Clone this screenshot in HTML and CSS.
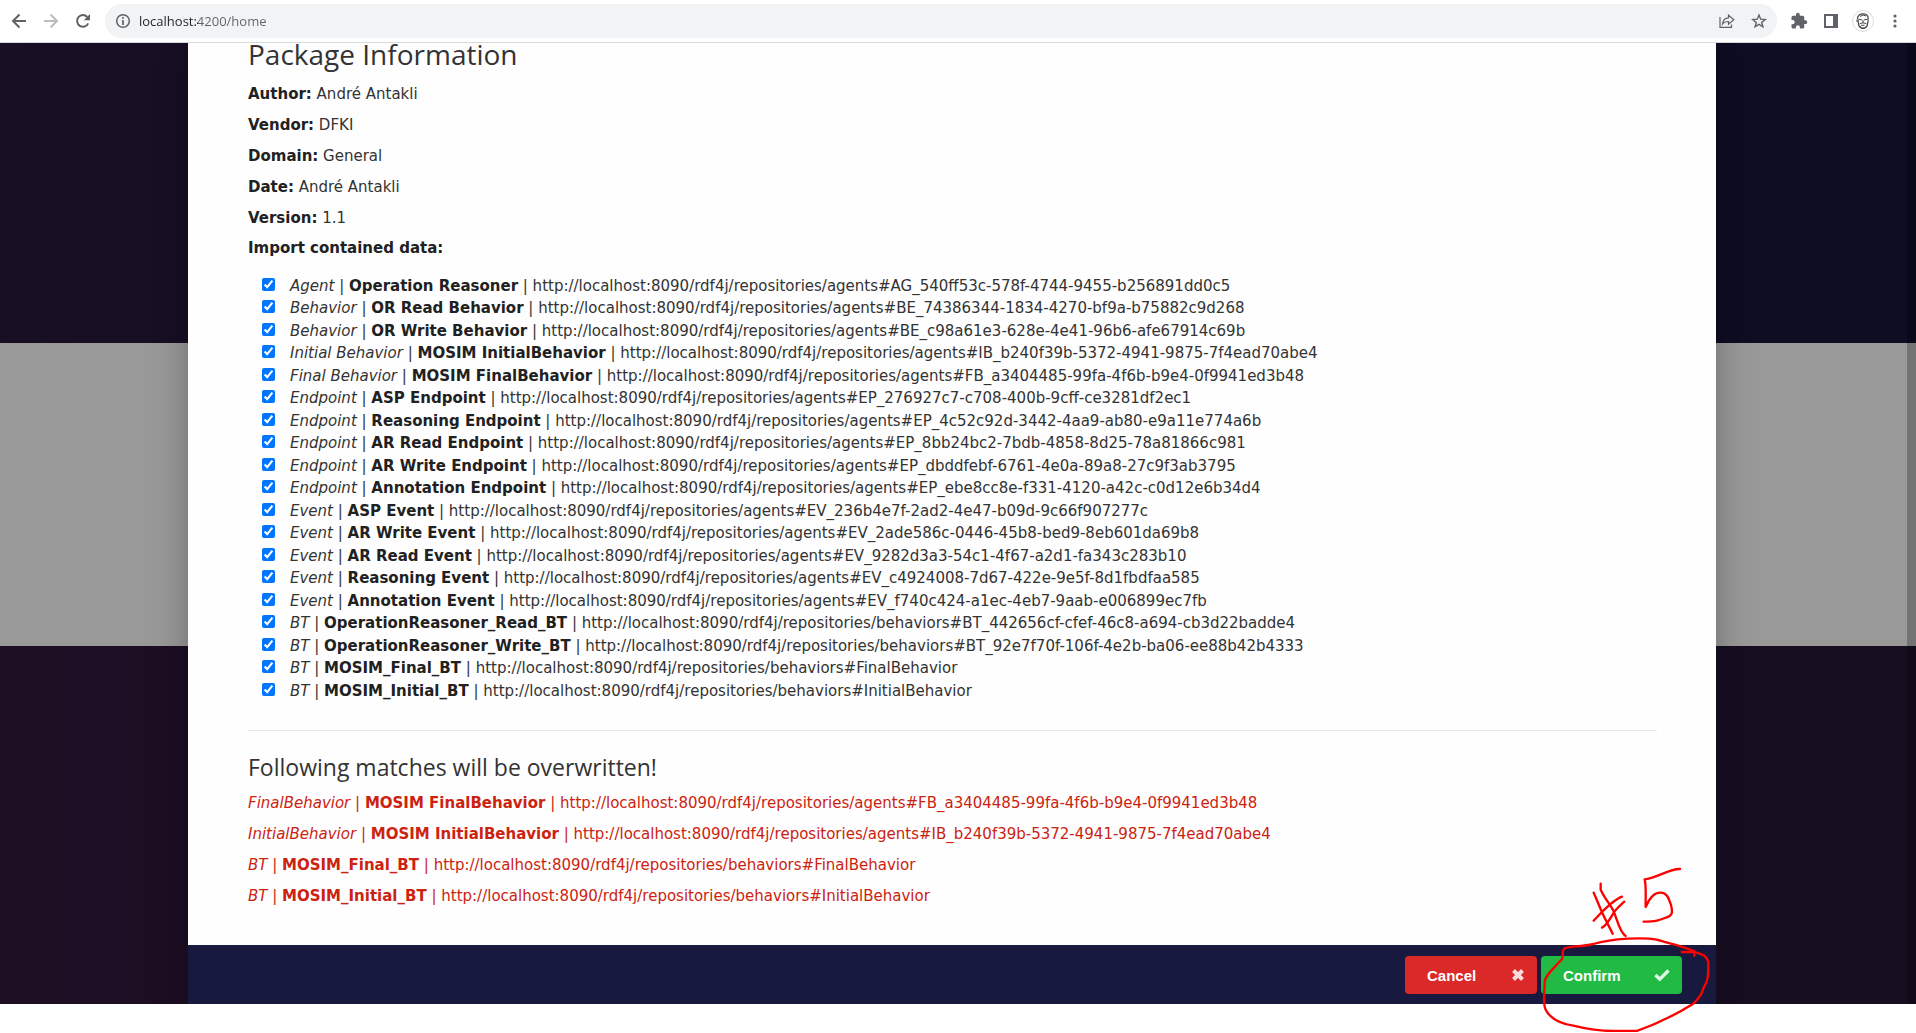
FILE: index.html
```html
<!DOCTYPE html>
<html lang="en">
<head>
<meta charset="utf-8">
<title>Package import</title>
<link rel="stylesheet" href="styles.css">
</head>
<body>
<header class="toolbar">
  <button class="tool" type="button" aria-label="Back"><svg width="16" height="16" viewBox="0 0 16 16" fill="none" stroke="#5f6368" stroke-width="2"><path d="M15 8H2.500M8.500 1.500L2 8l6.500 6.500"/></svg></button>
  <button class="tool" type="button" aria-label="Forward"><svg width="16" height="16" viewBox="0 0 16 16" fill="none" stroke="#babcbe" stroke-width="2"><path d="M1 8h12.500M7.500 1.500L14 8l-6.500 6.500"/></svg></button>
  <button class="tool" type="button" aria-label="Reload"><svg width="16" height="16" viewBox="0 0 16 16"><path d="M13.200 10.300A5.800 5.800 0 1 1 12.200 4" fill="none" stroke="#5f6368" stroke-width="2"/><path d="M15 1v6.200H8.800z" fill="#5f6368"/></svg></button>
  <div class="omnibox">
    <button class="site-info" type="button" aria-label="Site information"><svg width="16" height="16" viewBox="0 0 16 16" fill="none" stroke="#5f6368"><circle cx="8" cy="8" r="6.300" stroke-width="1.500"/><path d="M8 7v5M8 4v1.800" stroke-width="1.700"/></svg></button>
    <input class="address" type="text" value="localhost:4200/home" aria-label="Address">
    <button class="tool" type="button" aria-label="Share"><svg width="16" height="16" viewBox="0 0 16 16" fill="none" stroke="#5f6368" stroke-width="1.200"><path d="M1 4v10.400h11.500V11.500"/><path d="M3.500 11c.5-4 2.500-6 6-6.200V2l5.300 4.700-5.300 4.500V8.500C7 8.500 5 9 3.500 11z"/></svg></button>
    <button class="tool" type="button" aria-label="Bookmark"><svg width="16" height="16" viewBox="0 0 16 16" fill="none" stroke="#5f6368" stroke-width="1.400"><path d="M8 2l1.700 4.200 4.500.3-3.500 2.900 1.200 4.400L8 11.300l-3.900 2.500 1.200-4.400-3.500-2.900 4.500-.3z"/></svg></button>
  </div>
  <button class="tool" type="button" aria-label="Extensions"><svg width="18" height="18" viewBox="0 0 24 24" fill="#5f6368"><path d="M20.500 11H19V7a2 2 0 0 0-2-2h-4V3.500a2.500 2.500 0 0 0-5 0V5H4a2 2 0 0 0-2 2v3.800h1.500a2.700 2.700 0 0 1 0 5.400H2V20c0 1.100.9 2 2 2h3.800v-1.500a2.700 2.700 0 0 1 5.400 0V22H17a2 2 0 0 0 2-2v-4h1.500a2.500 2.500 0 0 0 0-5z"/></svg></button>
  <button class="tool" type="button" aria-label="Side panel"><svg width="14" height="14" viewBox="0 0 14 14"><path d="M0 0h14v14H0zM2 2v10h7V2z" fill="#5f6368" fill-rule="evenodd"/></svg></button>
  <button class="tool" type="button" aria-label="Profile"><svg width="22" height="22" viewBox="0 0 22 22" fill="none" stroke="#444"><circle cx="11" cy="11" r="10.500" fill="#fff" stroke="#dadce0"/><path d="M5.500 9c0-3.500 2.500-5.300 6-5.200 3.300.1 5 2.200 4.600 5.600" stroke-width="1.300"/><path d="M6 9.500l.5 5c1 2.800 2.500 4 4.500 4s4-1.500 4.500-4l.7-5" stroke-width="1.200"/><path d="M6.500 9.500l3.500.3M12 9.800l3.500-.5M11 10v3M7.500 14c2-1.500 5-1.500 7 0M9 15.300h3.500M8 16.500l2 1.500 3-.2 1.500-2M8 6.500l3-1.500 3 1M5 9.500v2.500" stroke-width="1"/></svg></button>
  <button class="tool" type="button" aria-label="Menu"><svg width="16" height="16" viewBox="0 0 16 16" fill="#5f6368"><circle cx="8" cy="3" r="1.600"/><circle cx="8" cy="8" r="1.600"/><circle cx="8" cy="13" r="1.600"/></svg></button>
</header>

<div class="page">
  <div class="backdrop">
    <main class="modal">
      <div class="modal-body">
        <h1 class="title">Package Information</h1>
        <p class="line"><b>Author:</b> André Antakli</p>
        <p class="line"><b>Vendor:</b> DFKI</p>
        <p class="line"><b>Domain:</b> General</p>
        <p class="line"><b>Date:</b> André Antakli</p>
        <p class="line"><b>Version:</b> 1.1</p>
        <p class="line list-label"><b>Import contained data:</b></p>
        <ul class="items">
          <li><label class="item"><input type="checkbox" checked><span><i>Agent</i> | <b>Operation Reasoner</b> | http://localhost:8090/rdf4j/repositories/agents#AG_540ff53c-578f-4744-9455-b256891dd0c5</span></label></li>
          <li><label class="item"><input type="checkbox" checked><span><i>Behavior</i> | <b>OR Read Behavior</b> | http://localhost:8090/rdf4j/repositories/agents#BE_74386344-1834-4270-bf9a-b75882c9d268</span></label></li>
          <li><label class="item"><input type="checkbox" checked><span><i>Behavior</i> | <b>OR Write Behavior</b> | http://localhost:8090/rdf4j/repositories/agents#BE_c98a61e3-628e-4e41-96b6-afe67914c69b</span></label></li>
          <li><label class="item"><input type="checkbox" checked><span><i>Initial Behavior</i> | <b>MOSIM InitialBehavior</b> | http://localhost:8090/rdf4j/repositories/agents#IB_b240f39b-5372-4941-9875-7f4ead70abe4</span></label></li>
          <li><label class="item"><input type="checkbox" checked><span><i>Final Behavior</i> | <b>MOSIM FinalBehavior</b> | http://localhost:8090/rdf4j/repositories/agents#FB_a3404485-99fa-4f6b-b9e4-0f9941ed3b48</span></label></li>
          <li><label class="item"><input type="checkbox" checked><span><i>Endpoint</i> | <b>ASP Endpoint</b> | http://localhost:8090/rdf4j/repositories/agents#EP_276927c7-c708-400b-9cff-ce3281df2ec1</span></label></li>
          <li><label class="item"><input type="checkbox" checked><span><i>Endpoint</i> | <b>Reasoning Endpoint</b> | http://localhost:8090/rdf4j/repositories/agents#EP_4c52c92d-3442-4aa9-ab80-e9a11e774a6b</span></label></li>
          <li><label class="item"><input type="checkbox" checked><span><i>Endpoint</i> | <b>AR Read Endpoint</b> | http://localhost:8090/rdf4j/repositories/agents#EP_8bb24bc2-7bdb-4858-8d25-78a81866c981</span></label></li>
          <li><label class="item"><input type="checkbox" checked><span><i>Endpoint</i> | <b>AR Write Endpoint</b> | http://localhost:8090/rdf4j/repositories/agents#EP_dbddfebf-6761-4e0a-89a8-27c9f3ab3795</span></label></li>
          <li><label class="item"><input type="checkbox" checked><span><i>Endpoint</i> | <b>Annotation Endpoint</b> | http://localhost:8090/rdf4j/repositories/agents#EP_ebe8cc8e-f331-4120-a42c-c0d12e6b34d4</span></label></li>
          <li><label class="item"><input type="checkbox" checked><span><i>Event</i> | <b>ASP Event</b> | http://localhost:8090/rdf4j/repositories/agents#EV_236b4e7f-2ad2-4e47-b09d-9c66f907277c</span></label></li>
          <li><label class="item"><input type="checkbox" checked><span><i>Event</i> | <b>AR Write Event</b> | http://localhost:8090/rdf4j/repositories/agents#EV_2ade586c-0446-45b8-bed9-8eb601da69b8</span></label></li>
          <li><label class="item"><input type="checkbox" checked><span><i>Event</i> | <b>AR Read Event</b> | http://localhost:8090/rdf4j/repositories/agents#EV_9282d3a3-54c1-4f67-a2d1-fa343c283b10</span></label></li>
          <li><label class="item"><input type="checkbox" checked><span><i>Event</i> | <b>Reasoning Event</b> | http://localhost:8090/rdf4j/repositories/agents#EV_c4924008-7d67-422e-9e5f-8d1fbdfaa585</span></label></li>
          <li><label class="item"><input type="checkbox" checked><span><i>Event</i> | <b>Annotation Event</b> | http://localhost:8090/rdf4j/repositories/agents#EV_f740c424-a1ec-4eb7-9aab-e006899ec7fb</span></label></li>
          <li><label class="item"><input type="checkbox" checked><span><i>BT</i> | <b>OperationReasoner_Read_BT</b> | http://localhost:8090/rdf4j/repositories/behaviors#BT_442656cf-cfef-46c8-a694-cb3d22badde4</span></label></li>
          <li><label class="item"><input type="checkbox" checked><span><i>BT</i> | <b>OperationReasoner_Write_BT</b> | http://localhost:8090/rdf4j/repositories/behaviors#BT_92e7f70f-106f-4e2b-ba06-ee88b42b4333</span></label></li>
          <li><label class="item"><input type="checkbox" checked><span><i>BT</i> | <b>MOSIM_Final_BT</b> | http://localhost:8090/rdf4j/repositories/behaviors#FinalBehavior</span></label></li>
          <li><label class="item"><input type="checkbox" checked><span><i>BT</i> | <b>MOSIM_Initial_BT</b> | http://localhost:8090/rdf4j/repositories/behaviors#InitialBehavior</span></label></li>
        </ul>
        <hr class="rule">
        <h2 class="subtitle">Following matches will be overwritten!</h2>
        <p class="line match"><i>FinalBehavior</i> | <b>MOSIM FinalBehavior</b> | http://localhost:8090/rdf4j/repositories/agents#FB_a3404485-99fa-4f6b-b9e4-0f9941ed3b48</p>
        <p class="line match"><i>InitialBehavior</i> | <b>MOSIM InitialBehavior</b> | http://localhost:8090/rdf4j/repositories/agents#IB_b240f39b-5372-4941-9875-7f4ead70abe4</p>
        <p class="line match"><i>BT</i> | <b>MOSIM_Final_BT</b> | http://localhost:8090/rdf4j/repositories/behaviors#FinalBehavior</p>
        <p class="line match"><i>BT</i> | <b>MOSIM_Initial_BT</b> | http://localhost:8090/rdf4j/repositories/behaviors#InitialBehavior</p>
      </div>
      <footer class="actions">
        <button class="btn btn-cancel" type="button">Cancel<svg width="14" height="14" viewBox="0 0 14 14"><path d="M2.500 2.500l9 9M11.500 2.500l-9 9" stroke="#fbdcdc" stroke-width="4"/></svg></button>
        <button class="btn btn-confirm" type="button">Confirm<svg width="16" height="14" viewBox="0 0 16 14"><path d="M1.500 7l4.300 4.200L14.500 2.500" fill="none" stroke="#e0f6e5" stroke-width="3.400"/></svg></button>
      </footer>
    </main>
    <div class="scroll-track"></div>
  </div>
  <svg class="markup" viewBox="0 0 1080 549" width="360" height="183" fill="none" stroke="#f00" stroke-width="7" stroke-linecap="round" stroke-linejoin="round" role="img" aria-label="Step #5: Confirm">
    <path d="M641 131C650 150 657 170 666 190S682 222 698 254M662 104V122C675 150 690 165 700 185S718 250 737 261M641 215C665 190 695 155 726 143M666 236C685 228 695 195 710 180S725 165 733 158"/>
    <path d="M900 60C870 58 825 90 794 91C800 120 796 150 797 174C805 155 820 130 842 131C862 132 866 148 873 168C880 195 874 200 860 205C840 213 830 218 791 218"/>
    <path d="M943 320V307C900 287 860 282 830 272C790 264 700 268 640 285C600 295 560 290 552 300C544 308 552 318 546 330C530 350 494 378 494 400C493 440 488 465 497 482C510 508 535 523 580 530C620 540 660 546 700 546H770C830 525 890 495 940 464C960 445 965 435 971 416C985 395 985 380 985 340C980 315 960 315 945 309H905"/>
  </svg>
</div>
</body>
</html>
```
FILE: styles.css
```css
* {
  box-sizing: border-box;
}

body {
  min-height: 100vh;
  margin: 0;
  background: #fff;
  color: #333;
  font: 15px "DejaVu Sans", Verdana, sans-serif;
}

b {
  color: #212121;
}

button {
  border: 0;
  padding: 0;
  background: none;
  cursor: pointer;
}

/* Browser toolbar */
.toolbar {
  position: relative;
  z-index: 1;
  display: flex;
  align-items: center;
  height: 43px;
  padding: 0 5px 0 3px;
  border-bottom: 1px solid #d5dad8;
  background: #fff;
}

.tool {
  display: flex;
  flex: none;
  align-items: center;
  justify-content: center;
  width: 32px;
  height: 32px;
}

.omnibox {
  display: flex;
  flex: 1;
  align-items: center;
  height: 34px;
  margin: 0 6px;
  padding: 0 2px 0 10px;
  border-radius: 17px;
  background: #f1f3f4;
}

.site-info {
  display: flex;
  margin-right: 8px;
}

.address {
  flex: 1;
  min-width: 0;
  height: 32px;
  border: 0;
  padding: 0;
  outline: 0;
  background: linear-gradient(90deg, #202124 59px, #5f6368 59px);
  background-clip: text;
  color: transparent;
  font: 13px "Open Sans", "Segoe UI", sans-serif;
}

/* Dimmed page behind the dialog */
.page {
  position: relative;
}

.backdrop {
  position: relative;
  clip-path: inset(-20px 0 0);
  padding: 0 200px 0 188px;
  background:
    linear-gradient(90deg, #180f24, #0d0d23) top / 100% 300px no-repeat,
    linear-gradient(#999, #999) 0 300px / 100% 303px no-repeat,
    linear-gradient(90deg, #1d0e24, #170e22);
}

.scroll-track {
  position: absolute;
  top: 0;
  right: 0;
  bottom: 0;
  width: 9px;
  background: rgba(0, 0, 0, .24);
}

/* Dialog */
.modal {
  background: #fefefe;
  box-shadow: 0 24px 38px 3px rgba(0, 0, 0, .14), 0 6px 24px 2px rgba(0, 0, 0, .12);
}

.modal-body {
  padding: 0 59px 33px 60px;
}

.title,
.subtitle {
  font-family: "Open Sans", "Segoe UI", sans-serif;
  font-weight: 400;
}

.title {
  margin: 0 0 14px;
  font-size: 28px;
  line-height: 22px;
}

.subtitle {
  margin: 21px 0 6px;
  font-size: 23px;
  line-height: 30px;
}

.line {
  margin: 0;
  line-height: 31px;
}

.list-label {
  line-height: 29px;
}

.items {
  margin: 12px 0 28px;
  padding: 0 0 0 14px;
  list-style: none;
}

.item {
  display: flex;
  align-items: flex-start;
  gap: 15px;
  line-height: 22px;
}

.items li:nth-child(even) {
  padding-bottom: 1px;
}

.item input {
  flex: none;
  width: 13px;
  height: 13px;
  margin: 3px 0 0;
}

.rule {
  height: 1px;
  margin: 0;
  border: 0;
  background: #e8e8e8;
}

.match,
.match b {
  color: #cc2310;
}

.actions {
  display: flex;
  justify-content: flex-end;
  gap: 4px;
  padding: 11px 34px 10px;
  background: #18193f;
}

.btn {
  display: flex;
  align-items: center;
  justify-content: space-between;
  height: 38px;
  padding: 0 12px 0 22px;
  border-radius: 4px;
  color: #fff;
  font: bold 15px "Liberation Sans", Arial, sans-serif;
}

.btn-cancel {
  width: 132px;
  background: #db2828;
}

.btn-confirm {
  width: 141px;
  background: #21ba45;
}

/* Hand-drawn note over the confirm button */
.markup {
  position: absolute;
  right: 176px;
  bottom: -28px;
  pointer-events: none;
}
```
